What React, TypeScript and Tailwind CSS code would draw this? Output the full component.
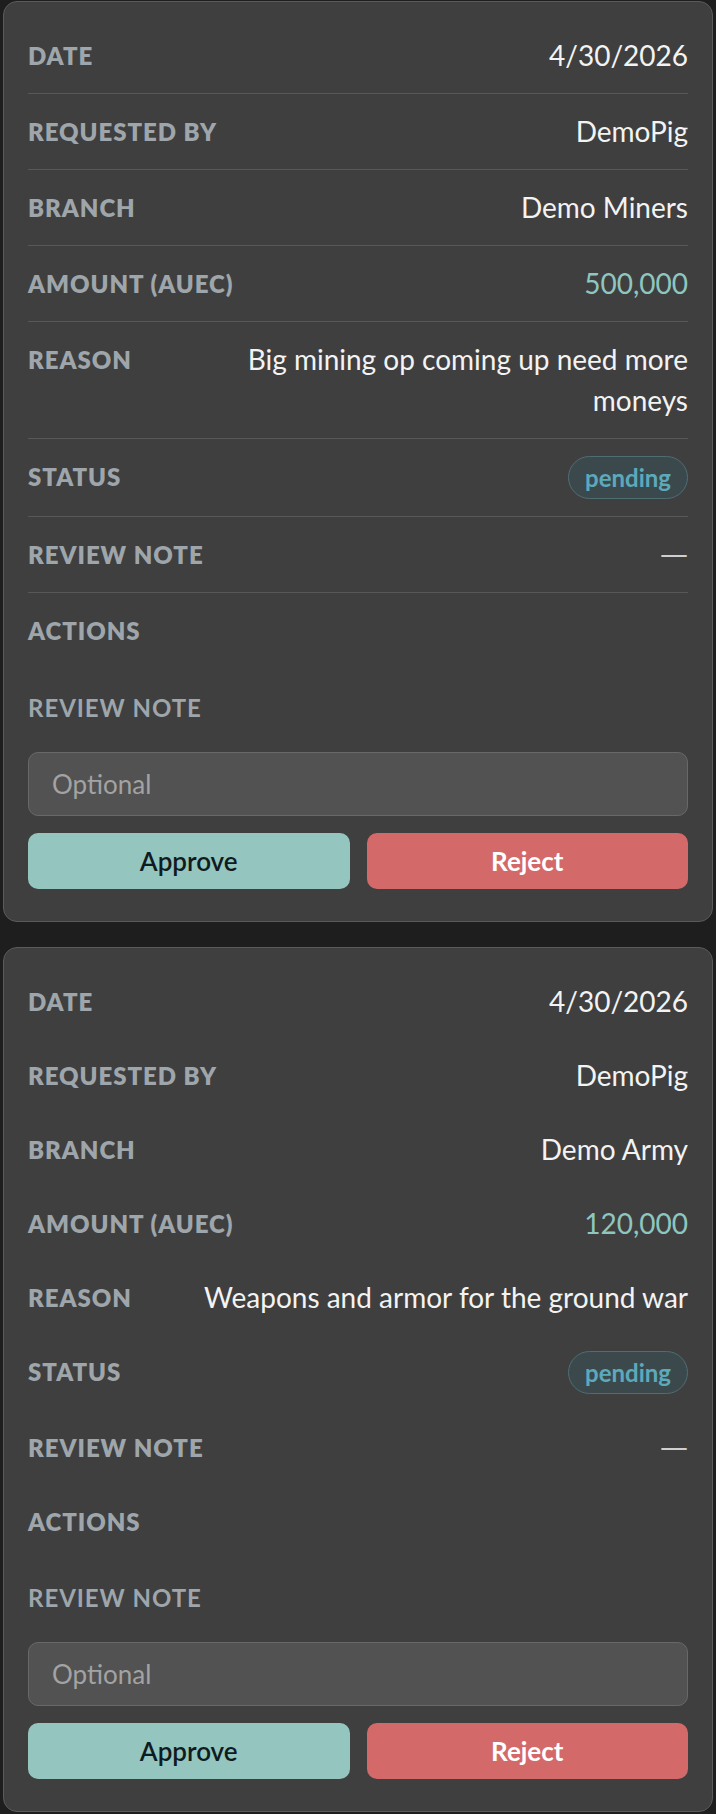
import React from "react";

type Request = {
  date: string;
  requestedBy: string;
  branch: string;
  amount: string;
  reason: string;
  status: string;
  reviewNote: string;
};

const requests: Request[] = [
  {
    date: "4/30/2026",
    requestedBy: "DemoPig",
    branch: "Demo Miners",
    amount: "500,000",
    reason: "Big mining op coming up need more moneys",
    status: "pending",
    reviewNote: "—",
  },
  {
    date: "4/30/2026",
    requestedBy: "DemoPig",
    branch: "Demo Army",
    amount: "120,000",
    reason: "Weapons and armor for the ground war",
    status: "pending",
    reviewNote: "—",
  },
];

const Label = ({ children }: { children: React.ReactNode }) => (
  <span className="shrink-0 text-[24px] leading-[41px] font-extrabold uppercase tracking-[0.04em] text-[#9ea6ab]">
    {children}
  </span>
);

const Row = ({
  label,
  divided,
  children,
}: {
  label: string;
  divided: boolean;
  children?: React.ReactNode;
}) => (
  <div
    className={
      "flex items-start justify-between gap-4 " +
      (divided ? "py-[17px] border-b border-[#585858]" : "py-[16.5px]")
    }
  >
    <Label>{label}</Label>
    <div className="max-w-[505px] text-right text-[28px] leading-[41px] text-[#f3f3f3]">{children}</div>
  </div>
);

const RequestCard = ({ req, divided }: { req: Request; divided: boolean }) => {
  return (
    <div className="rounded-[14px] border border-[#5a5a5a] bg-[#3f3f3f] px-6 pt-4 pb-8">
      <Row label="Date" divided={divided}>{req.date}</Row>
      <Row label="Requested By" divided={divided}>{req.requestedBy}</Row>
      <Row label="Branch" divided={divided}>{req.branch}</Row>
      <Row label="Amount (aUEC)" divided={divided}>
        <span className="text-[#8ec6c0]">{req.amount}</span>
      </Row>
      <Row label="Reason" divided={divided}>{req.reason}</Row>
      <Row label="Status" divided={divided}>
        <span className="inline-flex h-[43px] items-center rounded-full border border-[#4f6e74] bg-[#3b494d] px-4 text-[24px] font-bold text-[#5ca9bc]">
          {req.status}
        </span>
      </Row>
      <Row label="Review Note" divided={divided}>
        <span
          className="inline-block align-top leading-[41px] text-[#cfcfcf]"
          style={{ fontFamily: "'DejaVu Sans', sans-serif" }}
        >
          {req.reviewNote}
        </span>
      </Row>
      <div className={"flex " + (divided ? "py-[17px]" : "py-[16.5px]")}>
        <Label>Actions</Label>
      </div>
      <div className="mt-[19px] text-[24px] leading-[41px] font-bold uppercase tracking-[0.04em] text-[#9ea6ab]">
        Review Note
      </div>
      <input
        placeholder="Optional"
        className="mt-[24px] h-[64px] w-full rounded-[10px] border border-[#686868] bg-[#525252] px-[23px] text-[26px] text-white placeholder:text-[#a3a3a3] outline-none"
      />
      <div className="mt-[17px] grid grid-cols-2 gap-[17px]">
        <button className="h-[56px] rounded-[10px] bg-[#94c5bf] text-[26px] font-semibold text-[#0f1b21]">
          Approve
        </button>
        <button className="h-[56px] rounded-[10px] bg-[#d4696a] text-[26px] font-bold text-white">
          Reject
        </button>
      </div>
    </div>
  );
};

export default function App() {
  return (
    <div
      className="min-h-screen bg-[#1e1e1e] px-[3px] pt-px pb-1"
      style={{ fontFamily: "Lato, 'Noto Sans', sans-serif" }}
    >
      <div className="flex flex-col gap-[25px]">
        {requests.map((req, i) => (
          <RequestCard key={i} req={req} divided={i === 0} />
        ))}
      </div>
    </div>
  );
}
